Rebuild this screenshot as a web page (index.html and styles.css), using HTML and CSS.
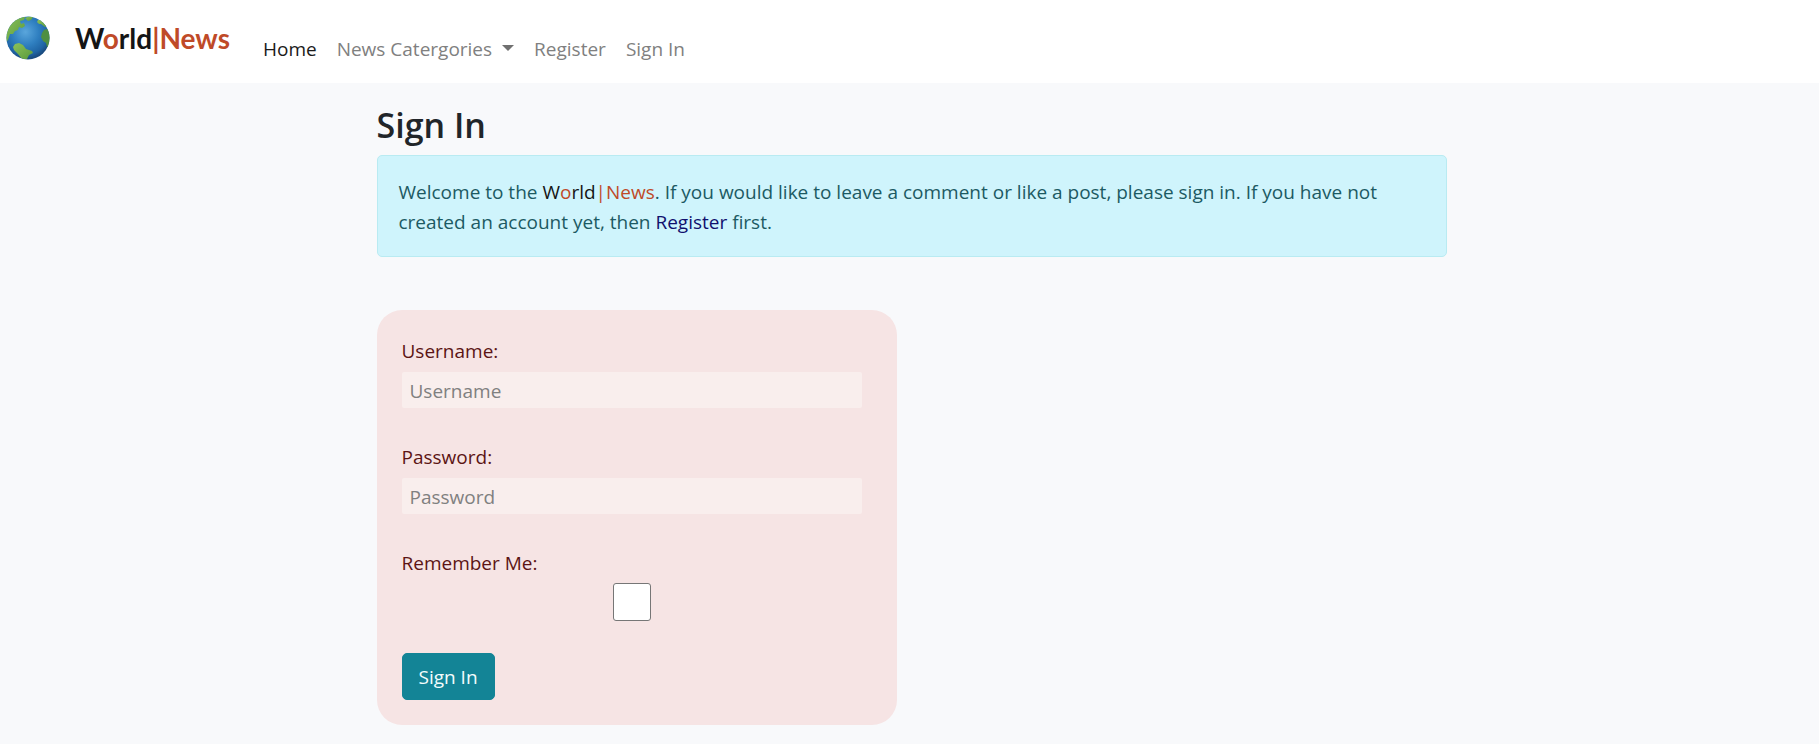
FILE: index.html
```html
<!DOCTYPE html>
<html lang="en">
<head>
<meta charset="utf-8">
<title>World|News - Sign In</title>
<meta name="viewport" content="width=device-width, initial-scale=1">
<link rel="stylesheet" href="styles.css">
</head>
<body>
<header class="navbar">
  <a class="brand" href="#">
    <svg class="globe" viewBox="0 0 44 44" aria-hidden="true">
      <defs>
        <radialGradient id="sea" cx="0.44" cy="0.36" r="0.62">
          <stop offset="0" stop-color="#5aa6dc"/>
          <stop offset="0.5" stop-color="#2f7fc0"/>
          <stop offset="0.85" stop-color="#1f64a4"/>
          <stop offset="1" stop-color="#1a4c80"/>
        </radialGradient>
        <linearGradient id="land" x1="0" y1="0" x2="1" y2="1">
          <stop offset="0" stop-color="#8cc25a"/>
          <stop offset="1" stop-color="#5a9a3c"/>
        </linearGradient>
        <clipPath id="disc"><circle cx="22" cy="22" r="21.5"/></clipPath>
      </defs>
      <circle cx="22" cy="22" r="21.5" fill="url(#sea)"/>
      <g clip-path="url(#disc)" fill="url(#land)">
        <path d="M-1 26V8L10 0L19 1L18 4L14 5L15 8L18 7L19 10L16 12L13 11L12 14L9 15L7 18L4 18L3 21L2 24L0 26Z"/>
        <path d="M19 2L24 0L27 1L25 4L22 5Z"/>
        <path d="M9 28L13 27L17 29L20 33L26 35L27 37L23 39L21 43L16 43L12 38L8 34L7 31Z"/>
        <path d="M32 4L36 4L41 10L39 11L35 8L33 8L31 6Z"/>
        <path d="M38 14L41 13L46 18V29L41 31L40 27L37 25L35 21L36 17Z" fill="#4f8f42"/>
      </g>
    </svg>
    <span class="brand-name">W<span class="accent">o</span>rld<span class="accent">|News</span></span>
  </a>
  <nav class="nav">
    <a class="nav-link active" href="#">Home</a>
    <a class="nav-link" href="#">News Catergories<span class="caret"></span></a>
    <a class="nav-link" href="#">Register</a>
    <a class="nav-link" href="#">Sign In</a>
  </nav>
</header>
<main class="page">
  <h1 class="title">Sign In</h1>
  <p class="alert">Welcome to the <span class="site">W<span class="accent">o</span>rld<span class="accent">|News</span></span>. If you would like to leave a comment or like a post, please sign in. If you have not created an account yet, then <a class="alert-link" href="#">Register</a> first.</p>
  <form class="card">
    <div class="field">
      <label for="username">Username:</label>
      <input class="text-box" id="username" type="text" placeholder="Username">
    </div>
    <div class="field">
      <label for="password">Password:</label>
      <input class="text-box" id="password" type="password" placeholder="Password">
    </div>
    <div class="field field-check">
      <label for="remember">Remember Me:</label>
      <input class="check" id="remember" type="checkbox">
    </div>
    <button class="submit" type="submit">Sign In</button>
  </form>
</main>
</body>
</html>
```
FILE: styles.css
```css
* { box-sizing: border-box; }
body {
  margin: 0;
  background: #f8f9fb;
  color: #212529;
  font: 19px/30px "Open Sans", "Noto Sans", sans-serif;
}
a { text-decoration: none; }
.accent { color: #bf4a28; }

.navbar {
  display: flex;
  align-items: flex-start;
  gap: 23px;
  padding: 16px 6px;
  background: #fff;
}
.brand {
  display: flex;
  align-items: flex-start;
  gap: 25px;
  color: #151515;
}
.globe { width: 44px; height: 44px; }
.brand-name {
  font: bold 28px/45px Lato, sans-serif;
}
.nav {
  display: flex;
  flex-wrap: wrap;
  padding-top: 18px;
}
.nav-link {
  padding: 0 10px 3px;
  color: #808080;
}
.nav-link.active { color: #1a1a1a; }
.caret {
  display: inline-block;
  margin-left: 10px;
  vertical-align: 5px;
  border: 6px solid transparent;
  border-top-color: #707070;
  border-bottom: 0;
}

.page {
  max-width: 1080px;
  margin: 0 auto;
  padding: 22px 3px 19px 7px;
}
.title {
  margin: 0 0 9px;
  font-size: 34px;
  font-weight: 600;
  line-height: 41px;
}
.alert {
  margin: 0 0 53px;
  padding: 21px 21px 19px;
  border: 1px solid #b9ebf2;
  border-radius: 5px;
  background: #cff4fc;
  color: #1c5a63;
}
.site { color: #151515; }
.alert-link { color: #10106e; }

.card {
  display: flex;
  flex-direction: column;
  align-items: flex-start;
  max-width: 520px;
  padding: 26px 25px 25px;
  border-radius: 25px;
  background: #f6e4e4;
}
.field {
  display: flex;
  flex-direction: column;
  width: 100%;
  max-width: 460px;
  margin-bottom: 34px;
  color: #5c1414;
}
.field label { margin-bottom: 6px; }
.text-box {
  width: 100%;
  height: 36px;
  padding: 2px 8px 0;
  border: 0;
  border-radius: 2px;
  background: #f9eeed;
  color: #212529;
  font: inherit;
}
.text-box::placeholder { color: #808080; }
.field-check { margin-bottom: 32px; }
.field-check label { margin-bottom: 5px; }
.check {
  align-self: center;
  appearance: none;
  width: 38px;
  height: 38px;
  margin: 0;
  border: 1px solid #767676;
  border-radius: 3px;
  background: #fff;
}
.check:checked { background: #138496; }
.submit {
  padding: 8px 16px 7px;
  border: 1px solid #138496;
  border-radius: 5px;
  background: #138496;
  color: #f4fdfd;
  font: inherit;
}
```
